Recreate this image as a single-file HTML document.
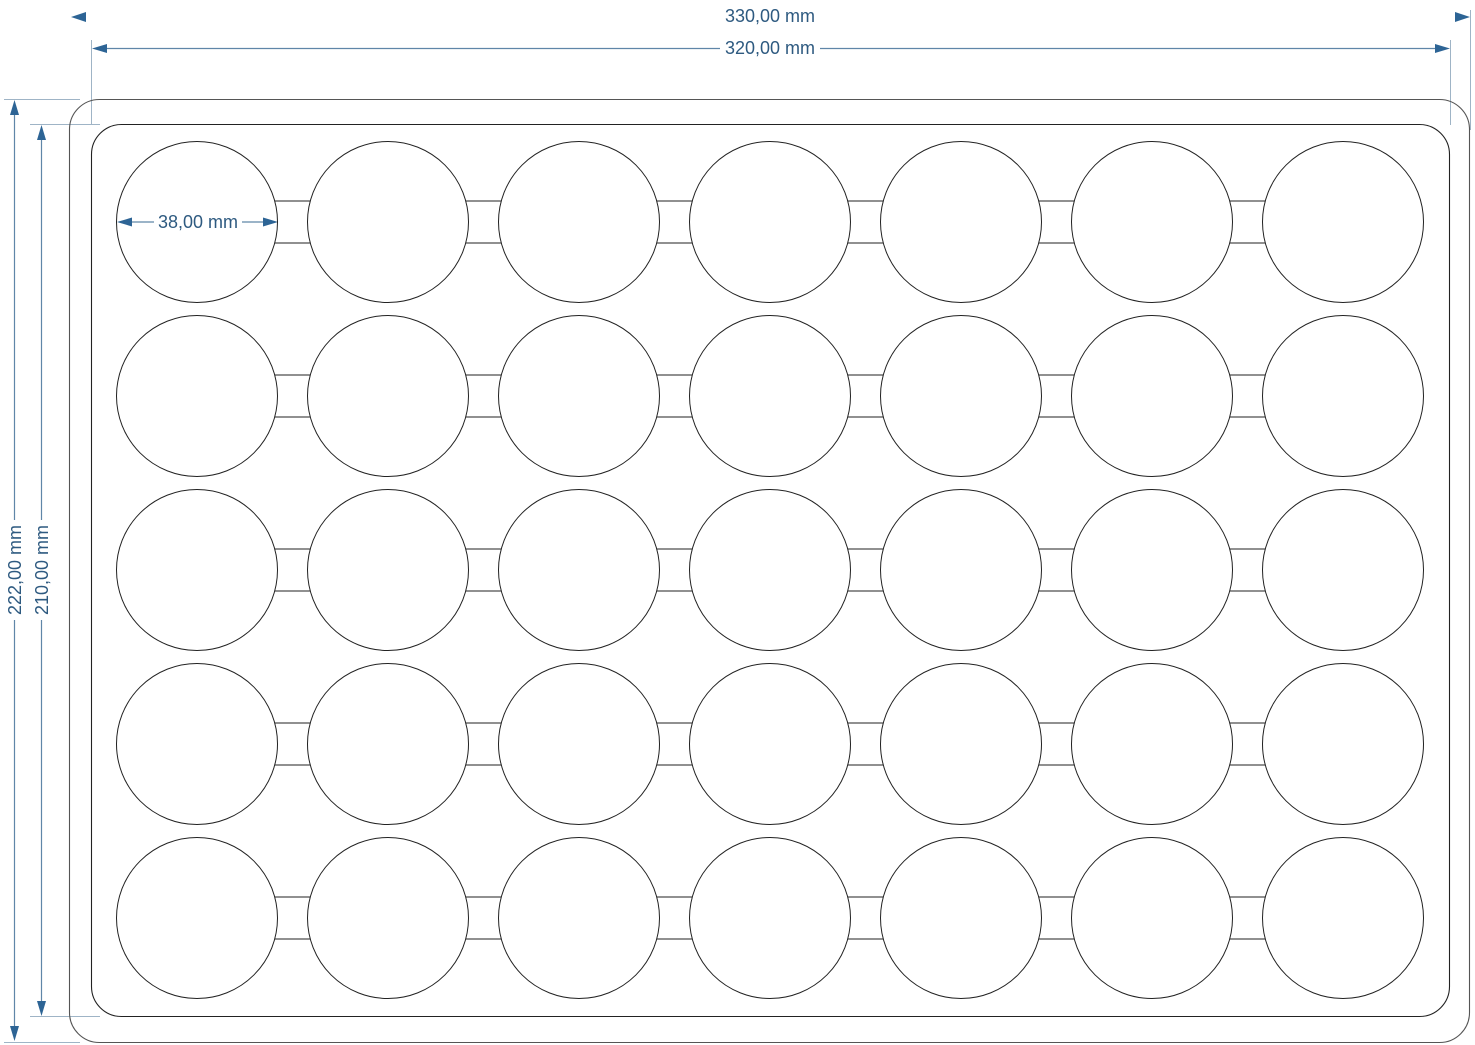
<!DOCTYPE html>
<html><head><meta charset="utf-8"><style>
html,body{margin:0;padding:0;background:#fff;}
svg{display:block}
text{font-family:"Liberation Sans",sans-serif;font-size:18px;fill:#2e5a80;}
</style></head><body>
<svg width="1475" height="1045" viewBox="0 0 1475 1045" xmlns="http://www.w3.org/2000/svg">
<g stroke="#9fb4c6" stroke-width="1" fill="none">
<line x1="91.5" y1="40" x2="91.5" y2="125"/>
<line x1="1450.5" y1="40" x2="1450.5" y2="125"/>
<line x1="1470.5" y1="10" x2="1470.5" y2="130"/>
<line x1="4" y1="99.5" x2="80" y2="99.5"/>
<line x1="30" y1="124.5" x2="100" y2="124.5"/>
<line x1="4" y1="1042.5" x2="80" y2="1042.5"/>
<line x1="30" y1="1016.5" x2="100" y2="1016.5"/>
</g>
<g stroke="#5f86a8" stroke-width="1.2">
<line x1="100" y1="48.5" x2="720" y2="48.5"/>
<line x1="820" y1="48.5" x2="1442" y2="48.5"/>
<line x1="14.5" y1="108" x2="14.5" y2="520"/>
<line x1="14.5" y1="620" x2="14.5" y2="1034"/>
<line x1="41.5" y1="133" x2="41.5" y2="520"/>
<line x1="41.5" y1="620" x2="41.5" y2="1008"/>
<line x1="130" y1="222" x2="154" y2="222"/>
<line x1="242" y1="222" x2="266" y2="222"/>
</g>
<g fill="#2d6495">
<polygon points="71,17 86,12 86,22"/>
<polygon points="1470,17 1455,12 1455,22"/>
<polygon points="92,48.5 107,44 107,53"/>
<polygon points="1450,48.5 1435,44 1435,53"/>
<polygon points="14.5,100 10,115 19,115"/>
<polygon points="14.5,1041 10,1026 19,1026"/>
<polygon points="41.5,125 37,140 46,140"/>
<polygon points="41.5,1016 37,1001 46,1001"/>
<polygon points="117,222 132,217.5 132,226.5"/>
<polygon points="278,222 263,217.5 263,226.5"/>
</g>
<text x="770" y="22" text-anchor="middle">330,00 mm</text>
<text x="770" y="54" text-anchor="middle">320,00 mm</text>
<text x="198" y="228" text-anchor="middle">38,00 mm</text>
<text transform="translate(21,570) rotate(-90)" text-anchor="middle">222,00 mm</text>
<text transform="translate(48,570) rotate(-90)" text-anchor="middle">210,00 mm</text>
<g fill="none" stroke="#222" stroke-width="1.1">
<rect x="69.5" y="99.5" width="1400" height="943" rx="30" stroke="#555"/>
<rect x="91.5" y="124.5" width="1358" height="892" rx="30"/>
</g>
<g id="g" fill="none" stroke="#222" stroke-width="1"></g>
</svg>
<script>
var g=document.getElementById('g'),s='';
var xs=[197,388,579,770,961,1152,1343],ys=[222,396,570,744,918];
ys.forEach(function(y){
 for(var i=0;i<6;i++){var a=xs[i]+78,b=xs[i+1]-78;
  s+='<line x1="'+a+'" y1="'+(y-21)+'" x2="'+b+'" y2="'+(y-21)+'"/><line x1="'+a+'" y1="'+(y+21)+'" x2="'+b+'" y2="'+(y+21)+'"/>';}
 xs.forEach(function(x){s+='<circle cx="'+x+'" cy="'+y+'" r="80.5"/>';});
});
g.innerHTML=s;
</script>
</body></html>
